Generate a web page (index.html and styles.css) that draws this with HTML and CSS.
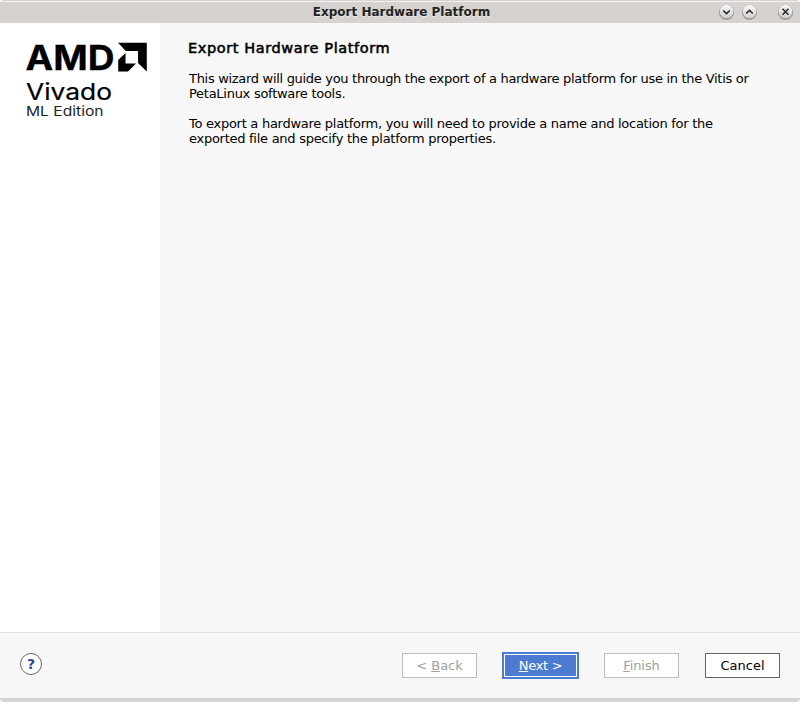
FILE: index.html
```html
<!DOCTYPE html>
<html lang="en">
<head>
<meta charset="utf-8">
<title>Export Hardware Platform</title>
<link rel="stylesheet" href="styles.css">
</head>
<body>
<div class="window">
  <header class="titlebar">
    <span class="caption">Export Hardware Platform</span>
    <div class="controls">
      <svg class="control" viewBox="0 0 16 16"><use href="#disc"/><path class="mark" d="M5.200 6.500 8.500 9.600l3.300-3.100"/></svg>
      <svg class="control" viewBox="0 0 16 16"><use href="#disc"/><path class="mark" d="M5.200 9.500 8.500 6.400l3.300 3.100"/></svg>
      <svg class="control close" viewBox="0 0 16 16">
        <defs>
          <linearGradient id="face" x1="0" y1="0" x2="0" y2="1"><stop offset="0" stop-color="#fafafa"/><stop offset="1" stop-color="#cfccc9"/></linearGradient>
          <g id="disc"><circle cx="8.500" cy="8.200" r="7.500" fill="#8e8a87"/><circle cx="8.500" cy="7.700" r="6.900" fill="url(#face)"/></g>
        </defs>
        <use href="#disc"/><path class="mark" d="m5.500 4.700 6 6M11.500 4.700l-6 6"/>
      </svg>
    </div>
  </header>
  <main class="body">
    <aside class="brand">
      <svg class="logo" width="160" height="110" viewBox="0 23 160 110">
        <text class="amd" x="25.500" y="70" textLength="89" lengthAdjust="spacingAndGlyphs">AMD</text>
        <path d="M118 42.700h28.800V71.500l-8.800-8.500V51h-12.200zM125.500 53v10.500H136l-8 8h-9.800V60z"/>
        <text class="product" x="26" y="99.500" textLength="86" lengthAdjust="spacingAndGlyphs">Vivado</text>
        <text class="edition" x="26" y="115.500" textLength="77.500" lengthAdjust="spacingAndGlyphs">ML Edition</text>
      </svg>
    </aside>
    <section class="content">
      <h1>Export Hardware Platform</h1>
      <p><span class="lead">This wizard will guide you through the export of a hardware platform for use in the Vitis or</span><br>PetaLinux software tools.</p>
      <p>To export a hardware platform, you will need to provide a name and location for the<br>exported file and specify the platform properties.</p>
    </section>
  </main>
  <footer class="actions">
    <button class="help">?</button>
    <button class="btn disabled">&lt; <u>B</u>ack</button>
    <button class="btn primary"><u>N</u>ext &gt;</button>
    <button class="btn disabled finish"><u>F</u>inish</button>
    <button class="btn">Cancel</button>
  </footer>
</div>
</body>
</html>
```
FILE: styles.css
```css
* { box-sizing: border-box; }
body { margin: 0; background: #fff; color: #000; font: 13px/15px "DejaVu Sans", sans-serif; }
button { margin: 0; padding: 0; font: inherit; color: inherit; }
.window { width: 800px; height: 702px; display: flex; flex-direction: column; border-bottom: 4px solid #d6d2cf; border-radius: 4px; background: #f7f7f7; overflow: hidden; }
.titlebar { flex: none; height: 23px; display: grid; grid-template-columns: 90px 1fr 90px; align-items: center; background: #d6d2cf; box-shadow: inset 0 1px #d6d2cf, inset 0 2px #f4f3f2; }
.caption { grid-column: 2; padding: 2px 0 0 3px; text-align: center; font-size: 12px; font-weight: bold; color: #222; text-shadow: 0 1px #eceae8; white-space: nowrap; }
.controls { display: flex; gap: 7px; padding-left: 8px; }
.control { width: 16px; height: 16px; flex: none; }
.close { margin-left: 13px; }
.mark { fill: none; stroke: #2b2b2b; stroke-width: 1.6; }
.body { flex: none; height: 609px; display: flex; }
.brand { width: 160px; background: #fff; }
.logo { display: block; }
.amd { font: 700 34px Inter, sans-serif; stroke: #000; stroke-width: .3px; }
.product { font: 400 23px Inter, sans-serif; stroke: #000; stroke-width: .2px; }
.edition { font: 400 13px Inter, sans-serif; fill: #222; }
.content { padding: 17px 0 0 29px; white-space: nowrap; }
h1 { margin: 0 0 15px -1px; font-size: 14.500px; line-height: 16px; font-weight: 400; letter-spacing: .6px; -webkit-text-stroke: .55px #000; }
p { margin: 0 0 15px; letter-spacing: -.27px; }
.lead { letter-spacing: -.305px; }
.actions { flex: 1; display: flex; align-items: center; border-top: 1px solid #e1e1e1; padding: 0 20px; }
.help { width: 22px; height: 22px; margin: 0 auto 3px 0; border: 1px solid #666; border-radius: 50%; background: #fff; color: #284a93; font-size: 14px; font-weight: bold; line-height: 20px; }
.btn { width: 75px; height: 25px; margin-left: 26px; border: 1px solid #666; background: #fff; }
.disabled { border-color: #bcbcbc; color: #a0a0a0; }
.primary { width: 77px; height: 27px; margin-left: 25px; border: 2px solid #4d7bd1; background: #4d7bd1; color: #fff; box-shadow: inset 0 0 0 1px #fff; letter-spacing: -.3px; }
.finish { margin-left: 25px; letter-spacing: -.1px; }
```
